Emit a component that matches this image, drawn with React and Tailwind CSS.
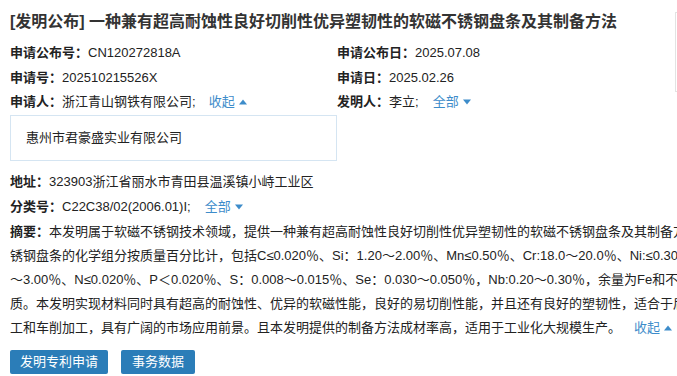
import React from "react";

const font = { fontFamily: '"Liberation Sans", "Noto Sans CJK SC", sans-serif' };

function Up() {
  return (
    <svg width="8" height="6" viewBox="0 0 8 6" className="inline-block ml-[4px] align-[1px]">
      <path d="M0 5.5 L4 0.5 L8 5.5 Z" fill="#3d8cca" />
    </svg>
  );
}
function Down() {
  return (
    <svg width="8" height="6" viewBox="0 0 8 6" className="inline-block ml-[4px] align-[1px]">
      <path d="M0 0.5 L4 5.5 L8 0.5 Z" fill="#3d8cca" />
    </svg>
  );
}

function Field({ label, children }) {
  return (
    <div className="whitespace-nowrap">
      <span className="font-bold text-[#222]">{label}</span>
      <span className="text-[#222]">{children}</span>
    </div>
  );
}

export default function App() {
  const lines = [
    "锈钢盘条的化学组分按质量百分比计，包括C≤0.020％、Si：1.20～2.00％、Mn≤0.50％、Cr:18.0～20.0％、Ni:≤0.30％、Mo:0.50～1.00％、Cu:2.00",
    "～3.00％、N≤0.020％、P＜0.020％、S：0.008～0.015％、Se：0.030～0.050％，Nb:0.20～0.30％，余量为Fe和不可避免的杂",
    "质。本发明实现材料同时具有超高的耐蚀性、优异的软磁性能，良好的易切削性能，并且还有良好的塑韧性，适合于后续的冷拉",
  ];
  return (
    <div className="relative w-[677px] h-[376px] overflow-hidden bg-white text-[13px]" style={font}>
      <div className="absolute left-[675px] top-[12px] w-[40px] h-[80px] border border-[#e3e3e3]"></div>
      <div className="pl-[10px] pt-[8px] w-[1000px]">
        <div className="text-[16px] leading-[28px] font-bold text-[#333] whitespace-nowrap">
          [发明公布] 一种兼有超高耐蚀性良好切削性优异塑韧性的软磁不锈钢盘条及其制备方法
        </div>
        <div className="mt-[5px] grid grid-cols-[327px_1fr] leading-[24.5px]">
          <Field label="申请公布号：">CN120272818A</Field>
          <Field label="申请公布日：">2025.07.08</Field>
          <Field label="申请号：">202510215526X</Field>
          <Field label="申请日：">2025.02.26</Field>
          <Field label="申请人：">
            浙江青山钢铁有限公司;
            <span className="ml-[13px] text-[#3d8cca]">收起</span>
            <Up />
          </Field>
          <Field label="发明人：">
            李立;
            <span className="ml-[14px] text-[#3d8cca]">全部</span>
            <Down />
          </Field>
        </div>
        <div className="w-[327px] h-[46px] border border-[#d5e5f2] flex items-center pl-[15px] text-[#222]">
          惠州市君豪盛实业有限公司
        </div>
        <div className="mt-[9px] leading-[24px] text-[#222]">
          <Field label="地址：">323903浙江省丽水市青田县温溪镇小峙工业区</Field>
          <div className="mt-[1px]">
            <Field label="分类号：">
              C22C38/02(2006.01)I;
              <span className="ml-[14px] text-[#3d8cca]">全部</span>
              <Down />
            </Field>
          </div>
          <div className="mt-[1px]">
            <Field label="摘要：">
              本发明属于软磁不锈钢技术领域，提供一种兼有超高耐蚀性良好切削性优异塑韧性的软磁不锈钢盘条及其制备方法，该软磁不
            </Field>
            {lines.map((l, i) => (
              <div key={i} className="whitespace-nowrap">{l}</div>
            ))}
            <div className="whitespace-nowrap">
              工和车削加工，具有广阔的市场应用前景。且本发明提供的制备方法成材率高，适用于工业化大规模生产。
              <span className="ml-[13px] text-[#3d8cca]">收起</span>
              <Up />
            </div>
          </div>
        </div>
        <div className="mt-[10px] flex gap-[13px]">
          <button className="h-[24px] px-[10px] rounded-[2px] bg-[#2b7db8] text-white text-[13px] leading-[24px]">发明专利申请</button>
          <button className="h-[24px] px-[11px] rounded-[2px] bg-[#2b7db8] text-white text-[13px] leading-[24px]">事务数据</button>
        </div>
      </div>
    </div>
  );
}
